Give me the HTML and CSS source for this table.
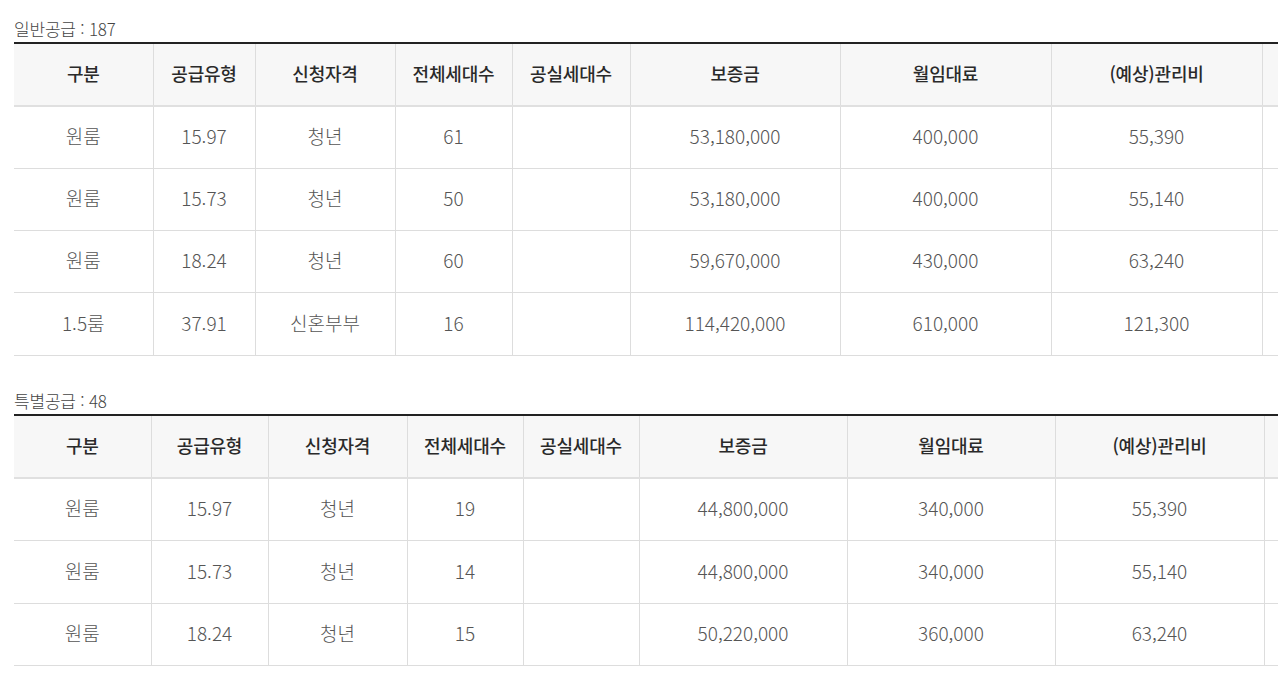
FILE: index.html
```html
<!DOCTYPE html>
<html lang="ko">
<head>
<meta charset="utf-8">
<title>공급 현황</title>
<link rel="stylesheet" href="styles.css">
</head>
<body>
<div class="page">
  <section class="supply">
    <p class="supply-title">일반공급 : 187</p>
    <div class="table-wrap">
      <table class="grid grid-general">
        <colgroup>
          <col class="c1"><col class="c2"><col class="c3"><col class="c4"><col class="c5"><col class="c6"><col class="c7"><col class="c8"><col class="c9">
        </colgroup>
        <thead>
          <tr><th>구분</th><th>공급유형</th><th>신청자격</th><th>전체세대수</th><th>공실세대수</th><th>보증금</th><th>월임대료</th><th>(예상)관리비</th><th></th></tr>
        </thead>
        <tbody>
          <tr><td>원룸</td><td>15.97</td><td>청년</td><td>61</td><td></td><td>53,180,000</td><td>400,000</td><td>55,390</td><td></td></tr>
          <tr><td>원룸</td><td>15.73</td><td>청년</td><td>50</td><td></td><td>53,180,000</td><td>400,000</td><td>55,140</td><td></td></tr>
          <tr><td>원룸</td><td>18.24</td><td>청년</td><td>60</td><td></td><td>59,670,000</td><td>430,000</td><td>63,240</td><td></td></tr>
          <tr class="row-tall"><td>1.5룸</td><td>37.91</td><td>신혼부부</td><td>16</td><td></td><td>114,420,000</td><td>610,000</td><td>121,300</td><td></td></tr>
        </tbody>
      </table>
    </div>
  </section>
  <section class="supply">
    <p class="supply-title">특별공급 : 48</p>
    <div class="table-wrap">
      <table class="grid grid-special">
        <colgroup>
          <col class="c1"><col class="c2"><col class="c3"><col class="c4"><col class="c5"><col class="c6"><col class="c7"><col class="c8"><col class="c9">
        </colgroup>
        <thead>
          <tr><th>구분</th><th>공급유형</th><th>신청자격</th><th>전체세대수</th><th>공실세대수</th><th>보증금</th><th>월임대료</th><th>(예상)관리비</th><th></th></tr>
        </thead>
        <tbody>
          <tr><td>원룸</td><td>15.97</td><td>청년</td><td>19</td><td></td><td>44,800,000</td><td>340,000</td><td>55,390</td><td></td></tr>
          <tr class="row-tall"><td>원룸</td><td>15.73</td><td>청년</td><td>14</td><td></td><td>44,800,000</td><td>340,000</td><td>55,140</td><td></td></tr>
          <tr><td>원룸</td><td>18.24</td><td>청년</td><td>15</td><td></td><td>50,220,000</td><td>360,000</td><td>63,240</td><td></td></tr>
        </tbody>
      </table>
    </div>
  </section>
</div>
</body>
</html>
```

FILE: styles.css
```css
html, body {
  margin: 0;
  padding: 0;
  background: #fff;
  overflow: hidden;
}

body {
  font-family: "Noto Sans CJK KR", "Noto Sans", sans-serif;
  color: #555;
}

.page {
  padding: 18px 0 0 14px;
}

.supply {
  margin-bottom: 34px;
}

.supply-title {
  margin: 0;
  height: 22px;
  padding-bottom: 2px;
  line-height: 22px;
  font-size: 17px;
  font-weight: 300;
  color: #444;
  letter-spacing: -0.2px;
}

.table-wrap {
  overflow: hidden;
}

.grid {
  border-collapse: collapse;
  table-layout: fixed;
  width: 1464px;
  border-top: 2px solid #222;
}

.grid th,
.grid td {
  padding: 0 0 4px;
  text-align: center;
  border-left: 1px solid #ddd;
}

.grid th:first-child,
.grid td:first-child {
  border-left: none;
}

.grid th {
  height: 57px;
  background: #f7f7f7;
  color: #2a2a2a;
  font-size: 18px;
  font-weight: 500;
  letter-spacing: -0.2px;
  border-bottom: 2px solid #e0e0e0;
}

.grid td {
  height: 57px;
  color: #555;
  font-size: 19px;
  font-weight: 300;
  border-bottom: 1px solid #ddd;
}

.grid .row-tall td {
  height: 58px;
}

.grid-general .c1 { width: 139px; }
.grid-general .c2 { width: 102px; }
.grid-general .c3 { width: 140px; }
.grid-general .c4 { width: 117px; }
.grid-general .c5 { width: 118px; }
.grid-general .c6 { width: 210px; }
.grid-general .c7 { width: 211px; }
.grid-general .c8 { width: 211px; }
.grid-general .c9 { width: 216px; }

.grid-special .c1 { width: 137px; }
.grid-special .c2 { width: 117px; }
.grid-special .c3 { width: 139px; }
.grid-special .c4 { width: 116px; }
.grid-special .c5 { width: 116px; }
.grid-special .c6 { width: 208px; }
.grid-special .c7 { width: 208px; }
.grid-special .c8 { width: 209px; }
.grid-special .c9 { width: 214px; }
```
